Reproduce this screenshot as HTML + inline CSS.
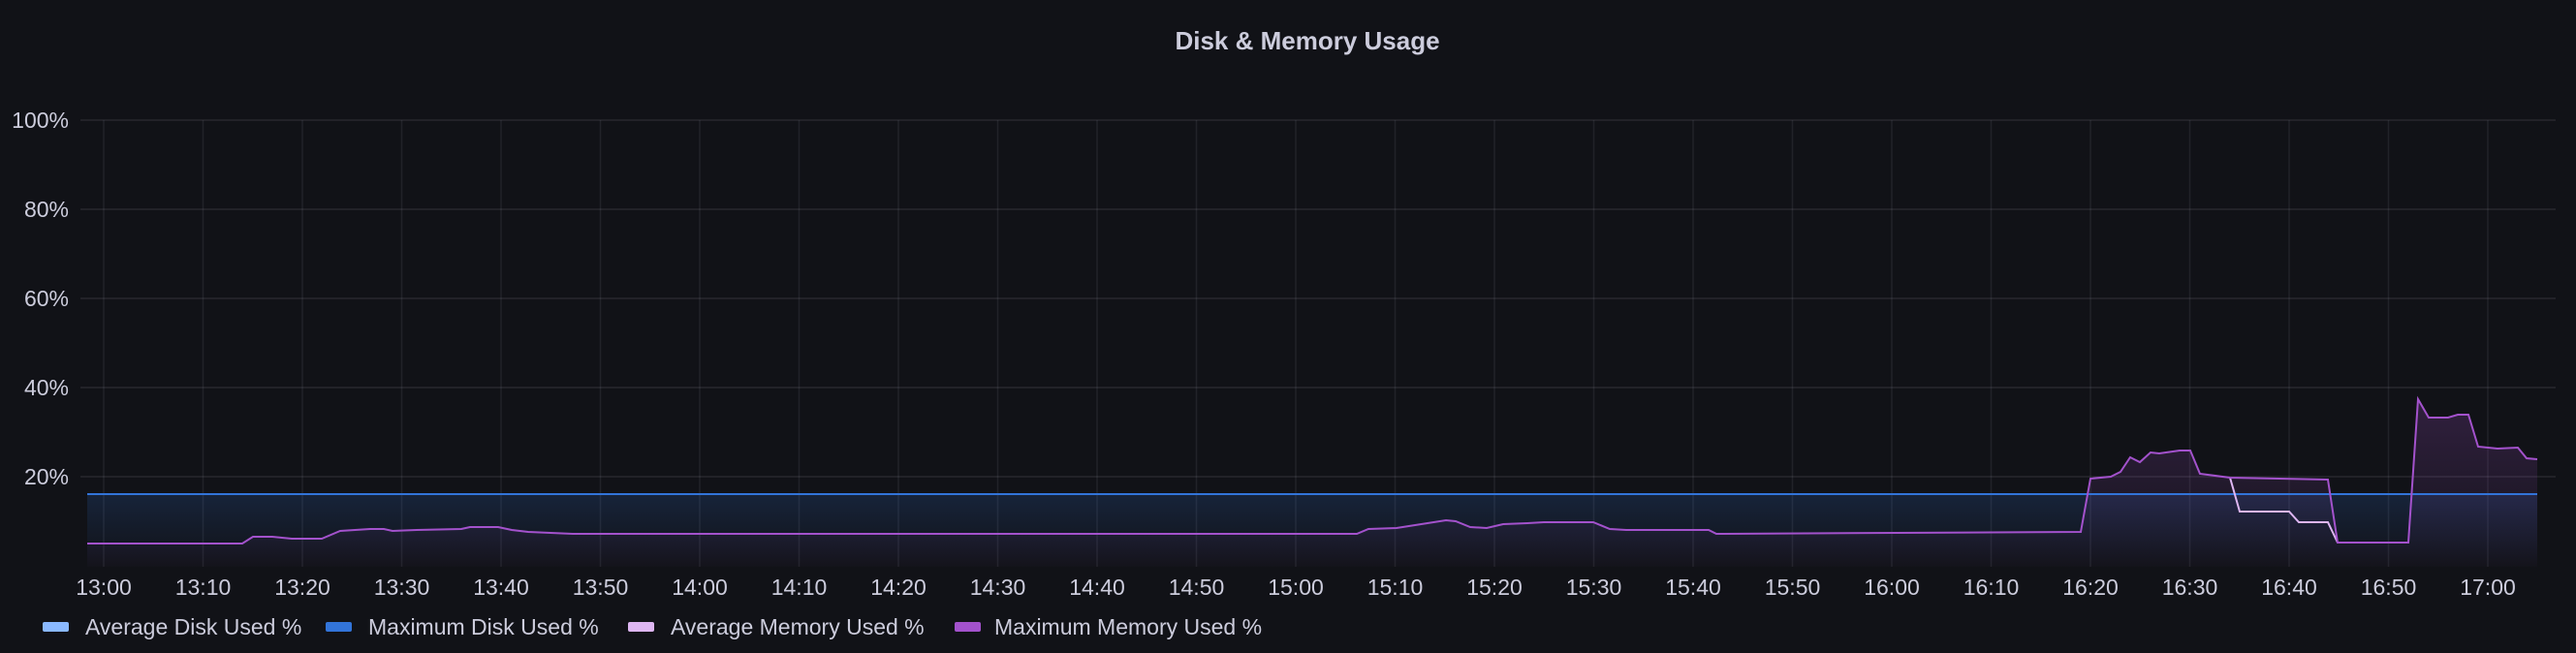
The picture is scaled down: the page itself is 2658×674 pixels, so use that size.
<!DOCTYPE html>
<html><head><meta charset="utf-8"><style>
html,body{margin:0;padding:0;background:#111217;width:2658px;height:674px;overflow:hidden;font-family:"Liberation Sans",sans-serif;}
</style></head><body>
<svg width="2658" height="674" viewBox="0 0 2658 674" xmlns="http://www.w3.org/2000/svg" font-family="Liberation Sans, sans-serif">
<defs>
<linearGradient id="gb" x1="0" y1="0" x2="0" y2="1"><stop offset="0" stop-color="#3274d9" stop-opacity="0.18"/><stop offset="1" stop-color="#3274d9" stop-opacity="0"/></linearGradient>
<linearGradient id="gp" x1="0" y1="0" x2="0" y2="1"><stop offset="0" stop-color="#a352cc" stop-opacity="0.22"/><stop offset="1" stop-color="#a352cc" stop-opacity="0.02"/></linearGradient>
</defs>
<text x="1349" y="51" text-anchor="middle" font-size="26" font-weight="bold" fill="#ccccdc">Disk &amp; Memory Usage</text>
<g stroke="#ccccdc" stroke-opacity="0.12" stroke-width="1.5">
<line x1="83" y1="124" x2="2637" y2="124"/><line x1="83" y1="216" x2="2637" y2="216"/><line x1="83" y1="308" x2="2637" y2="308"/><line x1="83" y1="400" x2="2637" y2="400"/><line x1="83" y1="492" x2="2637" y2="492"/>
</g>
<g stroke="#ccccdc" stroke-opacity="0.09" stroke-width="1.5" id="vg"></g>
<g font-size="23" fill="#ccccdc" text-anchor="end">
<text x="71" y="132">100%</text><text x="71" y="224">80%</text><text x="71" y="316">60%</text><text x="71" y="408">40%</text><text x="71" y="500">20%</text>
</g>
<g id="xl" font-size="23" fill="#ccccdc" text-anchor="middle"></g>
<rect x="90" y="510" width="2528" height="75" fill="url(#gb)"/>
<path d="M90,561 L250,561 261,554 281,554 301,556 332,556 351,548 382,546 396,546 405,548 430,547 476,546 485,544 514,544 528,547 545,549 591,551 1400,551 1412,546 1441,545 1492,537 1502,538 1517,544 1534,545 1551,541 1576,540 1593,539 1644,539 1661,546 1678,547 1763,547 1771,551 2147,549 2157,494 2178,492 2188,487 2198,472 2208,477 2219,467 2228,468 2249,465 2260,465 2270,489 2301,493 2402,495 2412,560 2485,560 2495,412 2506,431 2526,431 2536,428 2547,428 2557,461 2577,463 2598,462 2607,473 2618,474 L2618,585 L90,585 Z" fill="url(#gp)"/>
<line x1="90" y1="510" x2="2618" y2="510" stroke="#3274d9" stroke-width="2"/>
<path d="M2301,493 L2311,528 2362,528 2372,539 2402,539 2412,560" fill="none" stroke="#deb6f2" stroke-width="2"/>
<path d="M90,561 L250,561 261,554 281,554 301,556 332,556 351,548 382,546 396,546 405,548 430,547 476,546 485,544 514,544 528,547 545,549 591,551 1400,551 1412,546 1441,545 1492,537 1502,538 1517,544 1534,545 1551,541 1576,540 1593,539 1644,539 1661,546 1678,547 1763,547 1771,551 2147,549 2157,494 2178,492 2188,487 2198,472 2208,477 2219,467 2228,468 2249,465 2260,465 2270,489 2301,493 2402,495 2412,560 2485,560 2495,412 2506,431 2526,431 2536,428 2547,428 2557,461 2577,463 2598,462 2607,473 2618,474" fill="none" stroke="#a352cc" stroke-width="2"/>
<g font-size="23" fill="#ccccdc">
<rect x="44" y="642" width="27" height="10" rx="2" fill="#8ab8ff"/><text x="88" y="655">Average Disk Used %</text>
<rect x="336" y="642" width="27" height="10" rx="2" fill="#3274d9"/><text x="380" y="655">Maximum Disk Used %</text>
<rect x="648" y="642" width="27" height="10" rx="2" fill="#deb6f2"/><text x="692" y="655">Average Memory Used %</text>
<rect x="985" y="642" width="27" height="10" rx="2" fill="#a352cc"/><text x="1026" y="655">Maximum Memory Used %</text>
</g>
</svg>
<script>
var vg=document.getElementById('vg'),xl=document.getElementById('xl'),ns='http://www.w3.org/2000/svg';
for(var k=0;k<=24;k++){var x=107+102.5*k;var l=document.createElementNS(ns,'line');l.setAttribute('x1',x);l.setAttribute('x2',x);l.setAttribute('y1',124);l.setAttribute('y2',585);vg.appendChild(l);
var m=k*10,h=13+Math.floor(m/60),mm=m%60;var t=document.createElementNS(ns,'text');t.setAttribute('x',x);t.setAttribute('y',614);t.textContent=h+':'+(mm<10?'0':'')+mm;xl.appendChild(t);}
</script>
</body></html>
